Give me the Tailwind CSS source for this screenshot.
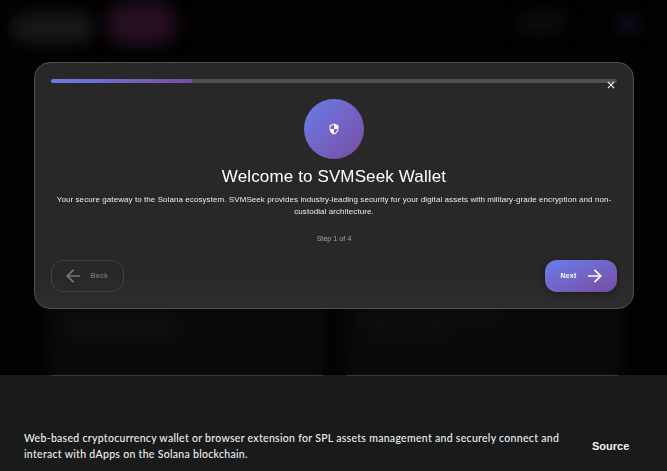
<!DOCTYPE html>
<html lang="en">
<head>
<meta charset="utf-8">
<title>SVMSeek Wallet</title>
<script src="https://cdn.jsdelivr.net/npm/@tailwindcss/browser@4"></script>
</head>
<body class="relative h-[471px] w-[667px] overflow-hidden bg-[#020202] font-['Liberation_Sans',Arial,sans-serif] text-white">
  <div class="flex h-full flex-col">
    <main class="relative h-[375px] shrink-0 overflow-hidden">
      <!-- blurred page behind the dialog -->
      <div class="absolute left-[14px] top-[16px] h-[24px] w-[80px] rounded-full bg-[#1c1e1d] blur-[9px]"></div>
      <div class="absolute left-[10px] top-[21px] size-[17px] rounded-full border-2 border-[#1a1a1a] blur-[3px]"></div>
      <div class="absolute left-[72px] top-[8px] size-[11px] rounded-full border border-[#131313]"></div>
      <div class="absolute left-[107px] top-[2px] h-[43px] w-[69px] rounded-[20px] bg-[#250f22] blur-[8px]"></div>
      <div class="absolute left-[516px] top-[12px] h-[22px] w-[50px] rounded-full bg-[#0d0d0d] blur-[8px]"></div>
      <div class="absolute left-[619px] top-[13px] h-[22px] w-[20px] rounded-full bg-[#120c20] blur-[7px]"></div>
      <div class="absolute left-[46px] top-[100px] h-[290px] w-[281px] rounded-[14px] bg-[#090a0c] blur-[8px]"></div>
      <div class="absolute left-[342px] top-[100px] h-[290px] w-[280px] rounded-[14px] bg-[#090a0c] blur-[8px]"></div>
      <div class="absolute left-[66px] top-[318px] h-[18px] w-[112px] rounded-full bg-[#101113] blur-[8px]"></div>
      <div class="absolute left-[364px] top-[308px] h-[12px] w-[134px] rounded-full bg-[#101113] blur-[8px]"></div>
      <div class="absolute left-[364px] top-[322px] h-[16px] w-[90px] rounded-full bg-[#0e0f11] blur-[8px]"></div>
    </main>
    <footer class="relative flex h-[96px] shrink-0 bg-[#181a1b] pl-6 pr-[37px] pt-[55px]">
      <div class="absolute left-[51px] top-0 h-px w-[272px] bg-[#35383f]"></div>
      <div class="absolute left-[346px] top-0 h-px w-[272px] bg-[#35383f]"></div>
      <p class="w-[568px] font-['Lato',sans-serif] text-[10.5px] font-medium leading-4 text-[#f2f0ed]">
        <span class="block w-fit whitespace-nowrap tracking-[0.3px]">Web-based cryptocurrency wallet or browser extension for SPL assets management and securely connect and</span>
        <span class="block w-fit whitespace-nowrap tracking-[0.3px]">interact with dApps on the Solana blockchain.</span>
      </p>
      <a class="mt-[8px] h-4 text-[11px] font-bold leading-4 text-[#f4f2ef]">Source</a>
    </footer>
  </div>

  <section class="absolute left-[34px] top-[62px] flex h-[247px] w-[600px] flex-col items-center rounded-[16px] border border-[#505050] bg-linear-to-b from-[#282828] from-85% to-[#2d2d2d] px-4 pt-4 will-change-transform">
    <div class="h-1 w-full overflow-hidden rounded-full bg-[#505050]">
      <div class="h-full w-[141px] bg-linear-to-r from-[#667eea] to-[#764ba2]"></div>
    </div>
    <button class="absolute right-[18px] top-[18px]" aria-label="Close">
      <svg class="block size-[8px]" viewBox="0 0 8 8" stroke="#fff" stroke-width="1.1"><path d="M.9.9 7.1 7.1M7.1.9.9 7.1"/></svg>
    </button>
    <div class="mt-4 flex size-[60px] shrink-0 items-center justify-center rounded-full bg-linear-to-br from-[#667eea] to-[#764ba2]">
      <svg class="size-[12px]" viewBox="0 0 24 24" fill="#fff"><path d="M12 1 3 5v6c0 5.550 3.840 10.740 9 12 5.160-1.260 9-6.450 9-12V5l-9-4zm0 10.990h7c-.53 4.120-3.280 7.790-7 8.940V12H5V6.300l7-3.110v8.800z"/></svg>
    </div>
    <h1 class="mt-[7px] whitespace-nowrap text-[17px] leading-[22px] tracking-[0.13px]">Welcome to SVMSeek Wallet</h1>
    <p class="mt-[6px] text-center text-[8px] leading-3 text-[#ececec]">
      <span class="block whitespace-nowrap tracking-[0.075px]">Your secure gateway to the Solana ecosystem. SVMSeek provides industry-leading security for your digital assets with military-grade encryption and non-</span>
      <span class="block whitespace-nowrap tracking-[0.075px]">custodial architecture.</span>
    </p>
    <p class="mt-[16px] text-[7px] leading-[10px] tracking-[0.08px] text-[#a8a8a8]">Step 1 of 4</p>
    <div class="mt-[16px] flex w-full justify-between">
      <button class="flex h-8 w-[73px] items-center rounded-[12px] border border-[#414141] pl-[14px] text-[7px] font-bold tracking-[0.25px] text-[#6c6c6c]">
        <svg class="mr-[10.5px] size-[14px]" viewBox="0 0 14 14" fill="none" stroke="#777" stroke-width="1.7"><path d="M14 7H1.500M7.500.8 1.300 7l6.200 6.200"/></svg>
        Back
      </button>
      <button class="flex h-8 w-[72px] items-center rounded-[12px] bg-linear-to-br from-[#667eea] to-[#764ba2] pl-[15.500px] text-[7px] font-bold tracking-[0.2px] text-white shadow-[0_2px_6px_rgba(0,0,0,.35)]">
        Next
        <svg class="ml-[11.500px] size-[14px]" viewBox="0 0 14 14" fill="none" stroke="#fff" stroke-width="1.7"><path d="M0 7h12.500M6.500.8 12.700 7l-6.200 6.200"/></svg>
      </button>
    </div>
  </section>
</body>
</html>
